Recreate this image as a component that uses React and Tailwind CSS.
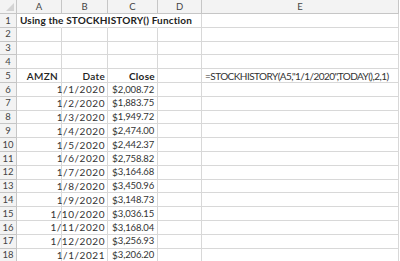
const data = [
  ['1/1/2020', '2,008.72'],
  ['1/2/2020', '1,883.75'],
  ['1/3/2020', '1,949.72'],
  ['1/4/2020', '2,474.00'],
  ['1/5/2020', '2,442.37'],
  ['1/6/2020', '2,758.82'],
  ['1/7/2020', '3,164.68'],
  ['1/8/2020', '3,450.96'],
  ['1/9/2020', '3,148.73'],
  ['1/10/2020', '3,036.15'],
  ['1/11/2020', '3,168.04'],
  ['1/12/2020', '3,256.93'],
  ['1/1/2021', '3,206.20'],
];

const cols = 'grid grid-cols-[17px_45px_46px_50px_44px_197px]';
const cell = 'border-r border-b border-[#d8d8d8] overflow-visible whitespace-nowrap';
const head = 'bg-[#f3f3f3] border-r border-b border-[#c6c6c6] text-[#444] flex items-center justify-center';

function Row({ n, children }) {
  return (
    <div className={`${cols} h-[13.8px]`}>
      <div className={`${head} text-[9.5px]`}>{n}</div>
      {children}
    </div>
  );
}

export default function App() {
  const blank = (k) => <div key={k} className={cell} />;
  return (
    <div className="w-[400px] h-[261px] bg-white overflow-hidden font-['Lato',sans-serif] text-[10px] leading-none text-[#222]">
      {/* column headers */}
      <div className={`${cols} h-[14px]`}>
        <div className={`${head} relative`}>
          <svg className="absolute right-[2px] bottom-[2px]" width="8" height="8" viewBox="0 0 8 8">
            <polygon points="8,0 8,8 0,8" fill="#d3d3d3" />
          </svg>
        </div>
        {['A', 'B', 'C', 'D', 'E'].map((c) => (
          <div key={c} className={`${head} text-[9.5px]`}>{c}</div>
        ))}
      </div>

      <Row n={1}>
        <div className={`${cell} border-r-transparent flex items-center pl-[3px] font-bold tracking-[0.15px] relative z-10`}>
          Using the STOCKHISTORY() Function
        </div>
        <div className="border-b border-r border-[#d8d8d8] border-r-transparent" />
        <div className="border-b border-r border-[#d8d8d8] border-r-transparent" />
        <div className={cell} />
        <div className={cell} />
      </Row>
      {[2, 3, 4].map((n) => (
        <Row key={n} n={n}>{[0, 1, 2, 3, 4].map(blank)}</Row>
      ))}
      <Row n={5}>
        <div className={`${cell} flex items-center justify-end pr-[3px] font-semibold tracking-[0.3px]`}>AMZN</div>
        <div className={`${cell} flex items-center justify-end pr-[2px] font-semibold tracking-[0.3px]`}>Date</div>
        <div className={`${cell} flex items-center justify-end pr-[2px] font-bold tracking-[0.3px]`}>Close</div>
        {blank('d')}
        <div className={`${cell} flex items-center pl-[3px] text-[#333] tracking-[-0.55px]`}>
          =STOCKHISTORY(A5,"1/1/2020",TODAY(),2,1)
        </div>
      </Row>
      {data.map(([d, v], i) => (
        <Row key={d} n={i + 6}>
          {blank('a')}
          <div className={`${cell} flex items-center justify-end pr-[2px] text-[#333] tracking-[0.55px]`}>{d}</div>
          <div className={`${cell} flex items-center justify-between pl-[4px] pr-[4px] text-[#333]`}>
            <span>$</span>
            <span className="text-[9.5px] tracking-[-0.15px]">{v}</span>
          </div>
          {blank('d')}
          {blank('e')}
        </Row>
      ))}
    </div>
  );
}
